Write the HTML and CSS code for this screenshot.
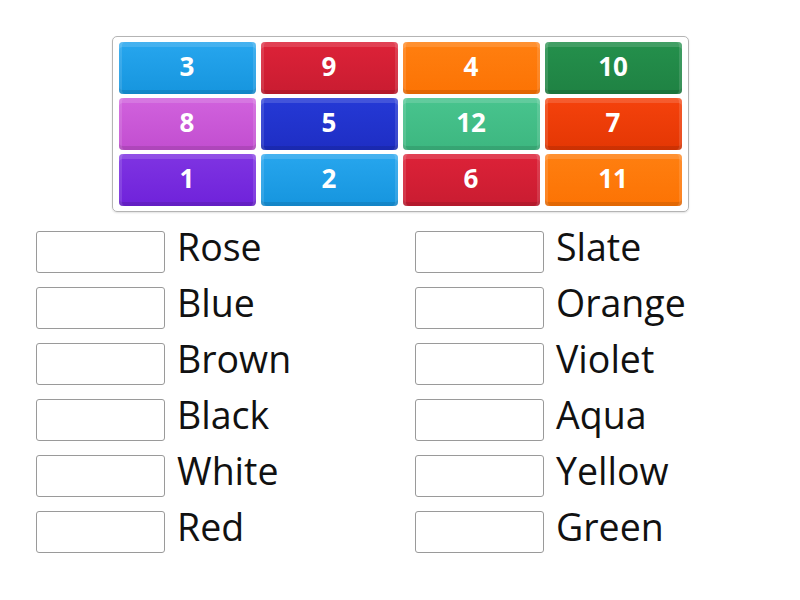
FILE: index.html
```
<!DOCTYPE html>
<html>
<head>
<meta charset="utf-8">
<link rel="stylesheet" href="styles.css">
</head>
<body>
<div class="board">
  <div class="grid">
    <div class="tile c-blue">3</div>
    <div class="tile c-red">9</div>
    <div class="tile c-orange">4</div>
    <div class="tile c-green">10</div>
    <div class="tile c-pink">8</div>
    <div class="tile c-royal">5</div>
    <div class="tile c-sea">12</div>
    <div class="tile c-vermilion">7</div>
    <div class="tile c-purple">1</div>
    <div class="tile c-blue">2</div>
    <div class="tile c-red">6</div>
    <div class="tile c-orange">11</div>
  </div>
</div>
<div class="answers">
  <div class="col">
    <div class="row"><div class="slot"></div><span class="label">Rose</span></div>
    <div class="row"><div class="slot"></div><span class="label">Blue</span></div>
    <div class="row"><div class="slot"></div><span class="label">Brown</span></div>
    <div class="row"><div class="slot"></div><span class="label">Black</span></div>
    <div class="row"><div class="slot"></div><span class="label">White</span></div>
    <div class="row"><div class="slot"></div><span class="label">Red</span></div>
  </div>
  <div class="col">
    <div class="row"><div class="slot"></div><span class="label">Slate</span></div>
    <div class="row"><div class="slot"></div><span class="label">Orange</span></div>
    <div class="row"><div class="slot"></div><span class="label">Violet</span></div>
    <div class="row"><div class="slot"></div><span class="label">Aqua</span></div>
    <div class="row"><div class="slot"></div><span class="label">Yellow</span></div>
    <div class="row"><div class="slot"></div><span class="label">Green</span></div>
  </div>
</div>
</body>
</html>
```
FILE: styles.css
```
html, body {
  margin: 0;
  padding: 0;
  background: #ffffff;
  font-family: "Open Sans", "Liberation Sans", sans-serif;
}

body {
  padding-top: 36px;
  width: 800px;
  height: 600px;
  box-sizing: border-box;
}

.board {
  width: 577px;
  box-sizing: border-box;
  margin: 0 auto;
  border: 1px solid #b4b4b4;
  border-radius: 5px;
  padding: 5px 6px 5px 6px;
  box-shadow: 0 1px 2px rgba(0,0,0,0.12);
}

.grid {
  display: grid;
  grid-template-columns: repeat(4, 1fr);
  grid-auto-rows: 52px;
  column-gap: 5px;
  row-gap: 4px;
}

.tile {
  display: flex;
  align-items: center;
  justify-content: center;
  border-radius: 4px;
  color: #ffffff;
  font-weight: 700;
  font-size: 26px;
  line-height: 1;
  padding-bottom: 5px;
  box-sizing: border-box;
  box-shadow:
    inset 0 5px 0 rgba(255,255,255,0.14),
    inset 3px 0 0 rgba(255,255,255,0.12),
    inset -3px 0 0 rgba(255,255,255,0.12),
    inset 0 -4px 0 rgba(0,0,0,0.10);
}

.c-blue { background: linear-gradient(#27a6ee, #1695de); }
.c-red { background: linear-gradient(#dd2238, #c91c31); }
.c-orange { background: linear-gradient(#ff7f10, #fc7304); }
.c-green { background: linear-gradient(#24904c, #1f8243); }
.c-pink { background: linear-gradient(#d162dd, #c24ed0); }
.c-royal { background: linear-gradient(#2539d6, #1e2ec4); }
.c-sea { background: linear-gradient(#48c48e, #3db780); }
.c-vermilion { background: linear-gradient(#f5420c, #e43704); }
.c-purple { background: linear-gradient(#7f34e2, #6f22da); }

.answers {
  display: grid;
  grid-template-columns: 379px 379px;
  padding-left: 36px;
  margin-top: 19px;
}

.col {
  display: flex;
  flex-direction: column;
  gap: 14px;
}

.row {
  display: flex;
  align-items: flex-start;
  gap: 12px;
  height: 42px;
}

.slot {
  width: 129px;
  height: 42px;
  box-sizing: border-box;
  border: 1px solid #9a9a9a;
  border-radius: 3px;
  background: #ffffff;
  flex: none;
}

.label {
  font-size: 37.5px;
  line-height: 31px;
  color: #111111;
}
```
